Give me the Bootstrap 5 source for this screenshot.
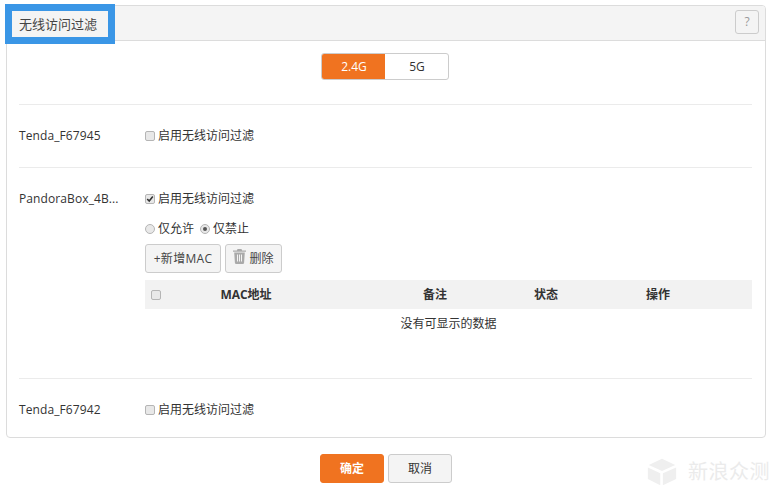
<!DOCTYPE html>
<html lang="zh-CN">
<head>
  <meta charset="UTF-8">
  <meta name="viewport" content="width=device-width, initial-scale=1.0">
  <title>无线访问过滤</title>
  <link href="https://cdn.jsdelivr.net/npm/bootstrap@5.3.0/dist/css/bootstrap.min.css" rel="stylesheet">
  <style>
    body {
      background-color: #fff;
      color: #333;
      font-family: "Open Sans", "Noto Sans CJK SC", sans-serif;
      font-size: 12px;
      line-height: 16px;
      width: 774px;
      height: 490px;
      overflow: hidden;
      position: relative;
    }
    .page-wrap {
      padding: 5px 8px 0 6px;
    }
    .filter-card {
      border: 1px solid #dcdcdc;
      border-radius: 4px;
      height: 433px;
    }
    .filter-head {
      height: 35px;
      background-color: #f4f4f4;
      border-bottom: 1px solid #dcdcdc;
      border-radius: 3px 3px 0 0;
      padding: 4px 6px 0 0;
    }
    .title-mark {
      position: absolute;
      left: 5px;
      top: 4px;
      width: 110px;
      height: 40px;
      border: 7px solid #3a96e6;
      background-color: #f4f4f4;
      padding: 4px 0 0 7px;
      font-size: 13px;
      line-height: 18px;
      color: #444;
    }
    .help-btn {
      width: 24px;
      height: 24px;
      padding: 0;
      border: 1px solid #ccc;
      border-radius: 3px;
      background-color: #f4f4f4;
      color: #999;
      font-size: 12px;
      line-height: 22px;
    }
    .filter-body {
      padding: 12px 13px 0 12px;
    }
    .band-switch {
      width: 128px;
      height: 27px;
      border: 1px solid #ccc;
      border-radius: 3px;
      overflow: hidden;
      margin-right: 2px;
    }
    .band-item {
      line-height: 25px;
      text-align: center;
      width: 50%;
      padding-left: 2px;
    }
    .band-on {
      background-color: #f07320;
      color: #fff;
    }
    .rule-line {
      border-top: 1px solid #ebebeb;
    }
    .rule-first {
      margin-top: 24px;
    }
    .rule-second {
      margin-top: 23px;
    }
    .ssid-row {
      display: flex;
      padding-top: 23px;
    }
    .ssid-name {
      width: 126px;
      flex-shrink: 0;
      letter-spacing: .1px;
    }
    .opt-col {
      flex-grow: 1;
      min-width: 0;
    }
    .form-check-input.chk {
      width: 10px;
      height: 10px;
      margin: 0 3px 0 0;
      border: 1px solid #b5b5b5;
      background-color: #e8e8e8;
      box-shadow: none;
      flex-shrink: 0;
    }
    .form-check-input.chk[type=checkbox] {
      border-radius: 2px;
    }
    .form-check-input.chk:checked {
      background-color: #e8e8e8;
      border-color: #b5b5b5;
      background-size: 8px;
    }
    .form-check-input.chk[type=checkbox]:checked {
      background-image: url("data:image/svg+xml,%3csvg xmlns='http://www.w3.org/2000/svg' viewBox='0 0 8 8'%3e%3cpath fill='none' stroke='%23333' stroke-width='1.6' d='M1.2 4l2 2 3.6-4.4'/%3e%3c/svg%3e");
    }
    .form-check-input.chk[type=radio]:checked {
      background-image: url("data:image/svg+xml,%3csvg xmlns='http://www.w3.org/2000/svg' viewBox='0 0 8 8'%3e%3ccircle cx='4' cy='4' r='2' fill='%23555'/%3e%3c/svg%3e");
    }
    .form-check-input.chk.radio-next {
      margin-left: 6px;
    }
    .opt-line {
      display: flex;
      align-items: center;
      height: 16px;
    }
    .gap-radio {
      margin-top: 14px;
    }
    .tool-row {
      margin-top: 7px;
      margin-bottom: 7px;
      gap: 4px;
    }
    .tool-btn {
      height: 29px;
      padding: 0;
      border: 1px solid #ccc;
      border-radius: 3px;
      background-color: #f4f4f4;
      color: #444;
      font-size: 12px;
      display: flex;
      align-items: center;
      justify-content: center;
    }
    .add-btn {
      width: 76px;
      letter-spacing: .3px;
    }
    .del-btn {
      width: 57px;
      gap: 3px;
    }
    .del-btn svg {
      margin-top: -4px;
    }
    .mac-head {
      height: 29px;
      background-color: #f2f2f2;
      font-weight: 700;
      color: #333;
      display: flex;
      align-items: center;
    }
    .mac-cell {
      text-align: center;
    }
    .chk-cell {
      width: 20px;
      padding-left: 6px;
      display: flex;
    }
    .mac-a {
      width: 162px;
    }
    .mac-b {
      width: 110px;
      margin-left: 53px;
    }
    .mac-c,
    .mac-d {
      width: 112px;
    }
    .empty-note {
      text-align: center;
      padding-top: 7px;
      height: 69px;
    }
    .foot-row {
      margin-top: 16px;
    }
    .foot-btn {
      width: 64px;
      height: 29px;
      padding: 0;
      border-radius: 3px;
      font-size: 12px;
      line-height: 27px;
    }
    .foot-ok {
      background-color: #f07320;
      border: 1px solid #f07320;
      color: #fff;
      font-weight: 700;
    }
    .foot-no {
      background-color: #f4f4f4;
      border: 1px solid #ccc;
      color: #333;
    }
    .sina-mark {
      position: absolute;
      left: 647px;
      top: 457px;
      color: #ebebeb;
      font-size: 20px;
      line-height: 30px;
      letter-spacing: .5px;
      display: flex;
      align-items: center;
      gap: 11px;
    }
  </style>
</head>
<body>
  <div class="page-wrap">
    <div class="filter-card">
      <div class="filter-head d-flex justify-content-end">
        <button class="help-btn" type="button">?</button>
      </div>
      <div class="filter-body">
        <div class="d-flex justify-content-center">
          <div class="band-switch d-flex">
            <div class="band-item band-on">2.4G</div>
            <div class="band-item">5G</div>
          </div>
        </div>

        <div class="rule-line rule-first"></div>
        <div class="ssid-row">
          <div class="ssid-name">Tenda_F67945</div>
          <div class="opt-line">
            <input class="form-check-input chk" type="checkbox">启用无线访问过滤
          </div>
        </div>

        <div class="rule-line rule-second"></div>
        <div class="ssid-row">
          <div class="ssid-name">PandoraBox_4B...</div>
          <div class="opt-col">
            <div class="opt-line">
              <input class="form-check-input chk" type="checkbox" checked>启用无线访问过滤
            </div>
            <div class="opt-line gap-radio">
              <input class="form-check-input chk" type="radio" name="mode">仅允许
              <input class="form-check-input chk radio-next" type="radio" name="mode" checked>仅禁止
            </div>
            <div class="d-flex tool-row">
              <button class="tool-btn add-btn" type="button">+新增MAC</button>
              <button class="tool-btn del-btn" type="button">
                <svg width="13" height="15" viewBox="0 0 13 15" fill="#aaa"><path d="M4.5 0h4l.6 1.4H13v1.4H0V1.400h3.900z"/><path fill-rule="evenodd" d="M1.200 3.600h10.600l-.7 10.200q-.1 1.200-1.300 1.200H3.200q-1.200 0-1.300-1.200zM4 5.500v7h1v-7zm2 0v7h1v-7zm2 0v7h1v-7z"/></svg>
                删除
              </button>
            </div>
            <div class="mac-head">
              <div class="mac-cell chk-cell"><input class="form-check-input chk" type="checkbox"></div>
              <div class="mac-cell mac-a">MAC地址</div>
              <div class="mac-cell mac-b">备注</div>
              <div class="mac-cell mac-c">状态</div>
              <div class="mac-cell mac-d">操作</div>
            </div>
            <div class="empty-note">没有可显示的数据</div>
          </div>
        </div>

        <div class="rule-line"></div>
        <div class="ssid-row">
          <div class="ssid-name">Tenda_F67942</div>
          <div class="opt-line">
            <input class="form-check-input chk" type="checkbox">启用无线访问过滤
          </div>
        </div>
      </div>
    </div>
    <div class="d-flex justify-content-center gap-1 foot-row">
      <button class="foot-btn foot-ok" type="button">确定</button>
      <button class="foot-btn foot-no" type="button">取消</button>
    </div>
  </div>

  <div class="title-mark">无线访问过滤</div>

  <div class="sina-mark">
    <svg width="30" height="30" viewBox="0 0 34 30" fill="#efefef"><path d="M17 0l15 7-15 7L2 7z"/><path d="M1 10l14 6.500V30L1 23z"/><path d="M33 10l-15 6.500V30l15-7z"/></svg>
    <span>新浪众测</span>
  </div>

  <script src="https://cdn.jsdelivr.net/npm/bootstrap@5.3.0/dist/js/bootstrap.bundle.min.js"></script>
</body>
</html>
